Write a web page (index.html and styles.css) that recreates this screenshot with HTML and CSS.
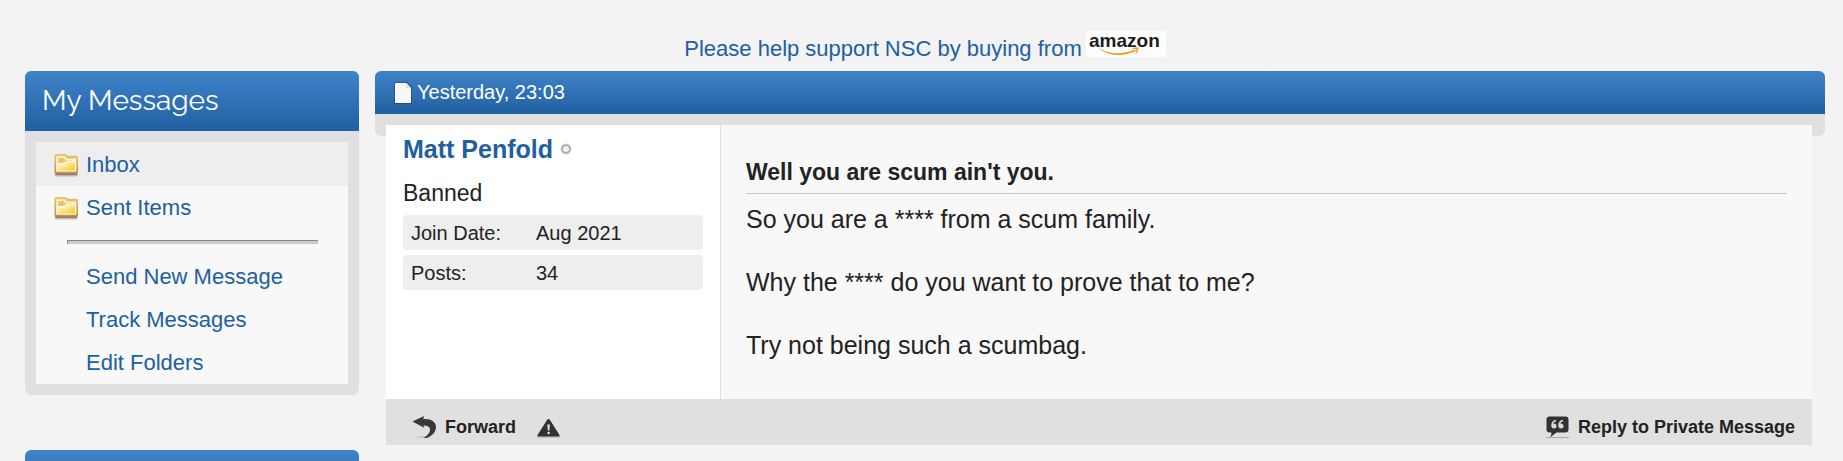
FILE: index.html
```html
<!DOCTYPE html>
<html lang="en">
<head>
<meta charset="utf-8">
<title>Private Message</title>
<link rel="stylesheet" href="styles.css">
</head>
<body>
<svg class="defs" aria-hidden="true">
  <defs>
    <linearGradient id="edge" x1="0" y1="0" x2="0" y2="1"><stop offset="0" stop-color="#dfc873"/><stop offset="1" stop-color="#cd8b3e"/></linearGradient>
    <linearGradient id="face" x1="0" y1="0" x2="1" y2="1"><stop offset="0" stop-color="#fff8dc"/><stop offset=".5" stop-color="#f9e58c"/><stop offset="1" stop-color="#efc81e"/></linearGradient>
    <symbol id="folder" viewBox="0 0 26 24">
      <path d="M1.500 21.500h23.500q0 2-2 2h-19.500q-2 0-2-2z" fill="#000" opacity=".22"/>
      <path d="M2 19h22.500v1.500q0 1.500-1.500 1.500H3.500Q2 22 2 20.500z" fill="#6c5644" opacity=".7"/>
      <path d="M1.500 2.500q0-1.500 1.500-1.500h9.500q1.500 0 2 1.800h9q1.500 0 1.500 1.500V19q0 1.500-1.500 1.500H3q-1.500 0-1.500-1.500z" fill="url(#edge)"/>
      <path d="M3 2.800h9.500l1.300 2h9.700V18.500H3z" fill="#f3d892"/>
      <path d="M3.500 3.500h8.700l1.500 2.500h9.300v3h-9l-3 3H3.500z" fill="#fff4cf"/>
      <path d="M5 5h6l1.500 2.500H19v1.300h-6.500L9.500 10H5z" fill="#ecc573"/>
      <path d="M3.500 11h7l3.500-3h9v10.500H3.500z" fill="#fff9e2"/>
      <path d="M4.500 12h6.500l3.500-3H22v8.500H4.500z" fill="url(#face)"/>
    </symbol>
  </defs>
</svg>
<div class="page">
  <header class="banner">
    <a class="support" href="#amazon"><span class="support-text">Please help support NSC by buying from</span>
      <svg class="amazon" viewBox="0 0 80 26" role="img" aria-label="amazon">
        <rect width="80" height="26" fill="#fdfdfd"/>
        <text class="amazon-word" x="3" y="16">amazon</text>
        <path d="M13 17.500q17 9 36 1l1 1.500q-20 9-37-2z" fill="#e9a11b"/>
        <path d="M45 18q4-2.500 7.500-1.200 0 4-3 6.200 1-3 1-4.800-2-.8-5.500-.2z" fill="#e9a11b"/>
      </svg>
    </a>
  </header>
  <div class="columns">
    <aside class="sidebar">
      <section class="block">
        <h2 class="block-head">My Messages</h2>
        <div class="block-body">
          <nav class="menu">
            <a class="item current" href="#inbox"><svg class="folder"><use href="#folder"/></svg>Inbox</a>
            <a class="item" href="#sent"><svg class="folder"><use href="#folder"/></svg>Sent Items</a>
            <hr class="rule">
            <a class="item plain" href="#new">Send New Message</a>
            <a class="item plain" href="#track">Track Messages</a>
            <a class="item plain" href="#folders">Edit Folders</a>
          </nav>
        </div>
      </section>
      <section class="block"><div class="block-head"></div></section>
    </aside>
    <main class="message">
      <div class="post-head">
        <svg class="doc" viewBox="0 0 18 22" aria-hidden="true">
          <path d="M0 0h13l5 5v17H0z" fill="#173f6c" opacity=".55"/>
          <path d="M1.500 1.500h11l4 4.500v14.500h-15z" fill="#f8f8f8" stroke="#fff"/>
          <path d="M12 1.500v5h4.500z" fill="#ddd"/>
        </svg>
        <time>Yesterday, 23:03</time>
      </div>
      <div class="shelf"></div>
      <article class="post">
        <div class="post-main">
          <div class="user">
            <div class="user-name"><a href="#user">Matt Penfold</a>
              <svg class="status" viewBox="0 0 12 12" role="img" aria-label="offline"><circle cx="6" cy="6" r="5.500" fill="#d4d4d4"/><circle cx="6" cy="6" r="3.800" fill="#f2f2f2" stroke="#a6a6a6" stroke-width="1.500"/></svg>
            </div>
            <div class="user-title">Banned</div>
            <dl class="stats">
              <div class="stat"><dt>Join Date:</dt><dd>Aug 2021</dd></div>
              <div class="stat"><dt>Posts:</dt><dd>34</dd></div>
            </dl>
          </div>
          <div class="content">
            <h1 class="subject">Well you are scum ain't you.</h1>
            <p>So you are a **** from a scum family.</p>
            <p>Why the **** do you want to prove that to me?</p>
            <p>Try not being such a scumbag.</p>
          </div>
        </div>
        <footer class="post-foot">
          <div class="group">
            <a class="action" href="#forward"><svg class="icon" viewBox="0 0 25 24" aria-hidden="true">
              <path d="M3 22.500q8-2 14 0z" fill="#aaa"/>
              <path d="M.5 6.500L12 1l-.7 3.200C19 3.500 24 7 24 12c0 5-4 9-9.500 11h-3c4.500-3 7-6 6.500-9-.4-2.500-3-3.800-6.700-3.600L12.500 13z" fill="#383838"/>
            </svg>Forward</a>
            <a class="report" href="#report" aria-label="Report"><svg class="icon" viewBox="0 0 25 24" aria-hidden="true">
              <path d="M1 21.500h23v1H1z" fill="#aaa"/>
              <path d="M12.500 4q1 0 1.500 1l9.500 15q.5 1.500-1 1.500h-20q-1.500 0-1-1.500L11 5q.5-1 1.500-1z" fill="#333"/>
              <path d="M11.300 9.500h2.600l-.5 6h-1.600z" fill="#e0e0e0"/><circle cx="12.600" cy="18" r="1.300" fill="#e0e0e0"/>
            </svg></a>
          </div>
          <a class="action" href="#reply"><svg class="icon" viewBox="0 0 25 24" aria-hidden="true">
            <path d="M1 22h23v1H1z" fill="#aaa"/>
            <path d="M4.500 1.500h16q3 0 3 3v10q0 3-3 3h-9Q8 20 5 22.500q1.500-2.500 1.500-5h-2q-3 0-3-3v-10q0-3 3-3z" fill="#333"/>
            <g fill="#d8d8d8"><circle cx="9" cy="11" r="2.500"/><circle cx="16" cy="11" r="2.500"/></g>
            <path d="M7.200 11.500Q6.500 6.500 11 5.500M14.200 11.500Q13.500 6.500 18 5.500" fill="none" stroke="#d8d8d8" stroke-width="1.600"/>
          </svg>Reply to Private Message</a>
        </footer>
      </article>
    </main>
  </div>
</div>
</body>
</html>
```

FILE: styles.css
```css
* { box-sizing: border-box; }

body {
  margin: 0;
  height: 100vh;
  overflow: hidden;
  background: #f3f3f3;
  color: #222;
  font-family: "Liberation Sans", Arial, sans-serif;
}

a { color: #2060a0; text-decoration: none; }
h1, h2, p, dl, dd { margin: 0; }
.defs { position: absolute; width: 0; height: 0; }
.page { padding: 0 18px 0 25px; }

.banner {
  padding: 31px 0 4px;
  text-align: center;
  font-size: 22px;
  line-height: 32px;
}
.support { display: inline-flex; align-items: flex-start; gap: 4px; }
.support-text { padding-top: 2px; }
.amazon { width: 80px; height: 26px; }
.amazon-word { font: bold 19px/20px "Liberation Sans", Arial, sans-serif; fill: #1c1c1c; }

.columns { display: flex; align-items: flex-start; gap: 16px; padding-top: 2px; }
.sidebar { flex: 0 0 334px; display: grid; gap: 55px; }
.block-head {
  min-height: 60px;
  padding: 0 17px;
  border-radius: 6px 6px 0 0;
  background: linear-gradient(#4083c9, #2060a0);
  color: #fff;
  font: 400 28px/60px Raleway, Lato, sans-serif;
}
.block-body { padding: 11px; border-radius: 0 0 6px 6px; background: #e0e0e0; }
.menu { display: flex; flex-direction: column; background: #f8f8f8; }
.item {
  display: flex;
  align-items: center;
  gap: 7px;
  padding-left: 17px;
  font-size: 22px;
  line-height: 43px;
}
.current { padding-top: 1px; background: #eee; }
.plain { padding-left: 50px; }
.folder { width: 26px; height: 24px; }
.rule { width: 251px; height: 4px; margin: 11px auto; border: 0; border-top: 1px solid #868686; border-left: 1px solid #868686; background: #ccc; }

.message { flex: 1; min-width: 0; }
.post-head {
  display: flex;
  align-items: center;
  gap: 5px;
  padding: 0 19px;
  border-radius: 6px 6px 0 0;
  background: linear-gradient(#4083c9, #2060a0);
  color: #fff;
  font-size: 20px;
  line-height: 43px;
}
.doc { width: 18px; height: 22px; }
.shelf { height: 22px; border-radius: 0 0 6px 6px; background: #e0e0e0; }
.post { position: relative; margin: -11px 13px 0 11px; }
.post-main { display: flex; min-height: 274px; background: #f8f8f8; }
.user { flex: 0 0 335px; padding: 9px 17px; border-right: 1px solid #e0e0e0; background: #fff; }
.user-name { display: flex; align-items: center; gap: 7px; font-size: 25px; font-weight: bold; line-height: 30px; }
.status { width: 12px; height: 12px; }
.user-title { padding: 14px 0 7px; font-size: 23px; line-height: 30px; }
.stats { display: grid; gap: 5px; font-size: 20px; line-height: 34px; }
.stat { display: grid; grid-template-columns: 125px 1fr; padding: 1px 8px 0; border-radius: 4px; background: #eee; }

.content { flex: 1; padding: 32px 25px; font-size: 25px; line-height: 31px; }
.subject { margin-bottom: 10px; padding-bottom: 6px; border-bottom: 1px solid #c8c8c8; font-size: 23px; line-height: 30px; }
.content p + p { margin-top: 32px; }

.post-foot {
  display: flex;
  justify-content: space-between;
  padding: 13px 17px 3px 26px;
  background: #e0e0e0;
  font-size: 18px;
  font-weight: bold;
  line-height: 30px;
}
.post-foot a { color: #222; }
.group { display: flex; gap: 20px; }
.action, .report { display: flex; align-items: center; gap: 8px; }
.icon { width: 25px; height: 24px; }
```
